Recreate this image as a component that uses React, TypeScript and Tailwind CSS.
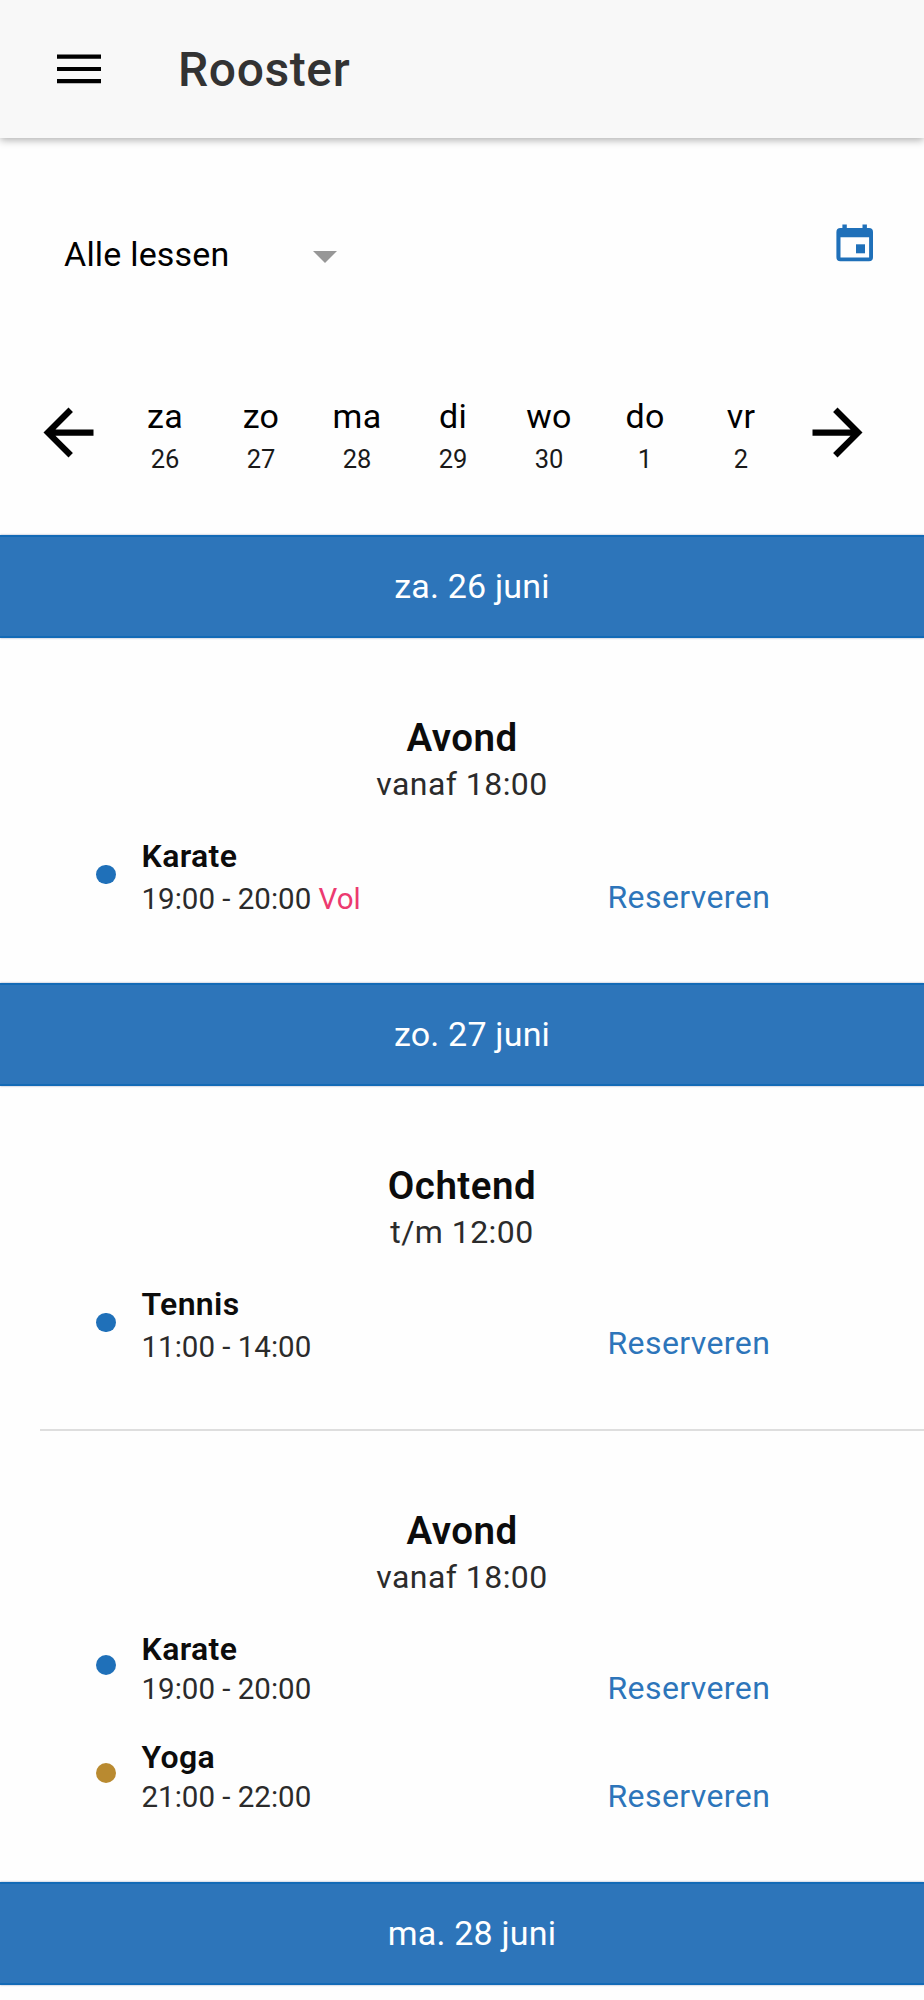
import React from "react";

type Lesson = { name: string; time: string; full?: boolean; dense?: boolean; dot: string };

const days: [string, string][] = [
  ["za", "26"],
  ["zo", "27"],
  ["ma", "28"],
  ["di", "29"],
  ["wo", "30"],
  ["do", "1"],
  ["vr", "2"],
];

function DayBar({ label }: { label: string }) {
  return (
    <h2 className="flex h-[103px] shrink-0 items-center justify-center border-y-2 border-[#136ab6] bg-[#2d75ba] pb-px pl-5 text-[34px] leading-[40px] font-normal tracking-[0.2px] text-white shadow-[0_0_2px_rgba(40,60,120,0.45)]">
      {label}
    </h2>
  );
}

function PartHeading({ title, hours }: { title: string; hours: string }) {
  return (
    <div className="text-center">
      <h3 className="text-[38.5px] leading-[46px] font-semibold tracking-[0.5px] text-[#0c0c0c]">{title}</h3>
      <p className="pt-px text-[32px] leading-[44px] tracking-[0.45px] text-[#2b2b2b]">{hours}</p>
    </div>
  );
}

function LessonRow({ name, time, full, dense, dot }: Lesson) {
  return (
    <li className="flex h-[88px] items-start">
      <span
        className={`ml-24 size-[19.5px] shrink-0 rounded-full ${dense ? "mt-[28.25px]" : "mt-[30.5px]"} ${dot}`}
      />
      <div className="ml-[26px] w-[466px]">
        <div className="text-[32px] leading-[44px] font-semibold tracking-[0.35px] text-[#0c0c0c]">{name}</div>
        <div className={`text-[29.5px] text-[#2b2b2b] ${dense ? "leading-[37px]" : "leading-[42px]"}`}>
          {time}
          {full && <span className="text-[#ec3a70]"> Vol</span>}
        </div>
      </div>
      <button
        className={`text-[32px] leading-[42px] tracking-[0.4px] text-[#2d75ba] ${full ? "mt-[42px]" : "mt-[40px]"}`}
      >
        Reserveren
      </button>
    </li>
  );
}

export default function App() {
  return (
    <div className="flex h-[2000px] w-[924px] flex-col overflow-hidden bg-[#fefefe] font-['Roboto',sans-serif] text-black">
      <header className="flex h-[138px] shrink-0 items-center bg-[#f8f8f8] pl-[57px] shadow-[0_2px_8px_rgba(0,0,0,0.32)]">
        <button aria-label="Menu">
          <svg className="h-[30px] w-11" viewBox="0 0 44 30" stroke="#000" strokeWidth="4.2">
            <path d="M0 2.700h44M0 15h44M0 27.200h44" />
          </svg>
        </button>
        <h1 className="ml-[77px] pt-0.5 text-[48px] leading-[56px] font-medium tracking-[0.6px] text-[#333]">
          Rooster
        </h1>
      </header>

      <div className="flex h-[242px] shrink-0 items-start justify-between pr-[50px] pl-16">
        <button className="mt-24 flex w-[273px] items-center justify-between text-[34px] leading-10 tracking-[0.2px]">
          Alle lessen
          <svg className="mt-1.5 h-3 w-6" viewBox="0 0 24 12" fill="#979797">
            <path d="M0 0h24L12 12z" />
          </svg>
        </button>
        <svg className="mt-[86px] h-[38px] w-[38px]" viewBox="0 0 38 38" fill="#1f70b9">
          <path
            fillRule="evenodd"
            d="M6.400 0.500h4.400v3.500h15.700V0.500h4.400v3.500h2.100a4 4 0 0 1 4 4v25.200a4 4 0 0 1-4 4H4.400a4 4 0 0 1-4-4V8a4 4 0 0 1 4-4h2zM4.500 13.200v20.300h28.600V13.200z"
          />
          <path d="M20 20.300h9v9h-9z" />
        </svg>
      </div>

      <nav className="flex h-[155px] shrink-0 items-start pl-[31px]">
        <svg className="mt-[14.5px] size-[75px]" viewBox="0 0 24 24">
          <path d="M20 11H7.830l5.590-5.590L12 4l-8 8 8 8 1.410-1.410L7.830 13H20v-2z" />
        </svg>
        <ul className="ml-[11px] grid w-[672px] grid-cols-7 text-center">
          {days.map(([name, date]) => (
            <li key={name}>
              <div className="mt-4 text-[34px] leading-[40px] tracking-[0.3px]">{name}</div>
              <div className="mt-[7px] text-[25.5px] leading-8 text-[#1a1a1a]">{date}</div>
            </li>
          ))}
        </ul>
        <svg className="mt-[14.5px] ml-[11px] size-[75px]" viewBox="0 0 24 24">
          <path d="M12 4l-1.410 1.410L16.170 11H4v2h12.170l-5.580 5.590L12 20l8-8z" />
        </svg>
      </nav>

      <DayBar label="za. 26 juni" />
      <section className="h-[345px] shrink-0 pt-[77px]">
        <PartHeading title="Avond" hours="vanaf 18:00" />
        <ul className="mt-7">
          <LessonRow name="Karate" time="19:00 - 20:00" full dot="bg-[#1f70b9]" />
        </ul>
      </section>

      <DayBar label="zo. 27 juni" />
      <section className="h-[343px] shrink-0 pt-[77px]">
        <PartHeading title="Ochtend" hours="t/m 12:00" />
        <ul className="mt-7">
          <LessonRow name="Tennis" time="11:00 - 14:00" dot="bg-[#1f70b9]" />
        </ul>
      </section>
      <hr className="ml-10 h-[2px] shrink-0 border-0 bg-[#dedede]" />
      <section className="h-[451px] shrink-0 pt-[77px]">
        <PartHeading title="Avond" hours="vanaf 18:00" />
        <ul className="mt-7 flex flex-col gap-5">
          <LessonRow name="Karate" time="19:00 - 20:00" dense dot="bg-[#1f70b9]" />
          <LessonRow name="Yoga" time="21:00 - 22:00" dense dot="bg-[#b98a30]" />
        </ul>
      </section>

      <DayBar label="ma. 28 juni" />
    </div>
  );
}
